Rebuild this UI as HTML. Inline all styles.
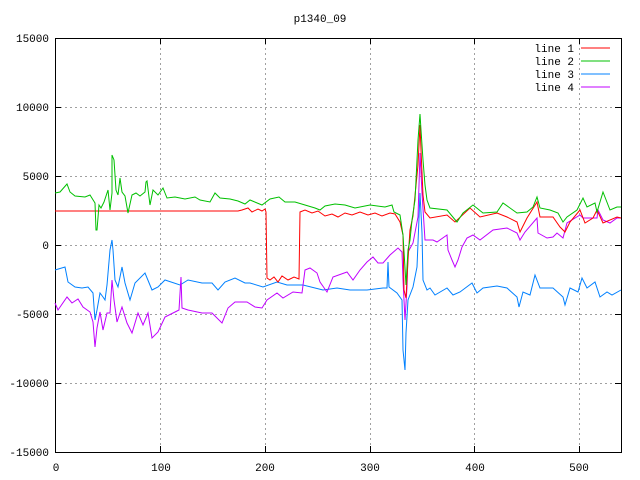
<!DOCTYPE html>
<html><head><meta charset="utf-8"><style>
html,body{margin:0;padding:0;background:#fff;}
svg{display:block;}
text{font-family:"Liberation Mono","DejaVu Sans Mono",monospace;font-size:11px;fill:#000;}
</style></head><body>
<svg width="640" height="480" viewBox="0 0 640 480" xmlns="http://www.w3.org/2000/svg">
<rect width="640" height="480" fill="#fff"/>
<g stroke="#a0a0a0" stroke-width="1" stroke-dasharray="2,3" fill="none">
<path d="M160.5 38V452M265.5 38V452M370.5 38V452M474.5 38V452M579.5 38V452"/>
<path d="M55 107.5H621M55 176.5H621M55 245.5H621M55 314.5H621M55 383.5H621"/>
</g>
<g stroke="#000" stroke-width="1" fill="none">
<rect x="55.5" y="38.5" width="566" height="414"/>
<path d="M55 38.5h6M55 107.5h6M55 176.5h6M55 245.5h6M55 314.5h6M55 383.5h6M55 452.5h6M621 38.5h-6M621 107.5h-6M621 176.5h-6M621 245.5h-6M621 314.5h-6M621 383.5h-6M621 452.5h-6"/>
<path d="M55.5 452v-6M160.5 452v-6M265.5 452v-6M370.5 452v-6M474.5 452v-6M579.5 452v-6M160.5 38v6M265.5 38v6M370.5 38v6M474.5 38v6M579.5 38v6"/>
</g>
<text x="320" y="22" text-anchor="middle">p1340_09</text>
<g text-anchor="end">
<text x="49" y="42">15000</text><text x="49" y="111">10000</text><text x="49" y="180">5000</text>
<text x="49" y="249">0</text><text x="49" y="318">-5000</text><text x="49" y="387">-10000</text><text x="49" y="456">-15000</text>
</g>
<g text-anchor="middle">
<text x="56" y="471">0</text><text x="161" y="471">100</text><text x="265" y="471">200</text><text x="370" y="471">300</text><text x="475" y="471">400</text><text x="579" y="471">500</text>
</g>
<g text-anchor="end">
<text x="574" y="52">line 1</text><text x="574" y="65">line 2</text><text x="574" y="78">line 3</text><text x="574" y="91">line 4</text>
</g>
<g stroke-width="1" fill="none">
<path stroke="#ff0000" d="M581 48h29"/><path stroke="#00c000" d="M581 61h29"/><path stroke="#0080ff" d="M581 74h29"/><path stroke="#c000ff" d="M581 87h29"/>
<polyline stroke="#0080ff" points="55,270 65,267 68,282 75,287 82,288 88,287 93,293 95,320 97,310 100,293 103,297 105,300 107,285 110,250 112,240 113,250 115,280 118,287 122,267 125,283 130,300 135,283 145,273 152,290 158,287 165,280 180,285 188,280 202,283 212,283 218,290 225,282 235,278 245,283 250,283 263,287 277,282 287,285 303,285 323,290 337,288 350,290 367,290 383,288 387,288 388,262 389,287 397,293 402,300 403,350 405,370 406,333 408,300 413,287 417,267 418,243 420,193 422,233 423,280 427,290 430,288 435,295 447,288 453,295 460,292 472,283 477,293 483,288 497,286 507,288 517,297 519,307 523,292 530,295 535,275 540,288 553,288 563,297 565,305 570,288 578,292 582,278 587,288 595,282 600,297 607,292 612,295 621,290"/>
<polyline stroke="#c000ff" points="55,303 58,310 67,297 72,303 78,299 83,307 90,312 93,322 95,347 97,328 100,312 103,330 107,313 110,313 112,280 114,300 117,322 122,307 127,323 132,333 138,313 143,325 148,313 152,338 158,332 165,317 175,312 179,310 181,277 182,308 188,310 202,313 212,313 222,323 228,308 235,302 247,302 255,307 262,308 267,300 277,293 283,298 293,292 302,293 305,270 310,268 317,273 320,282 327,292 333,277 347,272 353,280 360,270 367,262 373,257 378,263 383,263 390,255 398,248 402,252 403,280 405,320 407,287 408,252 413,243 418,217 420,153 422,193 425,240 433,240 437,242 447,235 448,250 452,260 455,267 458,260 462,247 467,238 473,235 480,240 493,230 507,228 517,233 520,240 525,232 537,218 538,233 547,238 553,237 557,233 563,238 567,223 580,215 583,218 597,218 598,210 603,220 610,223 617,218 621,218"/>
<polyline stroke="#ff0000" points="55,211 238,211 242,210 248,208 252,212 258,209 262,211 265,209 266,212 267,278 270,280 274,277 278,282 282,276 288,280 294,277 299,279 300,212 305,210 312,213 318,211 325,216 332,214 338,217 345,213 352,215 360,212 368,215 375,213 382,216 390,213 395,214 400,222 403,235 404,290 406,298 408,260 410,230 413,216 418,165 420,125 421,150 423,195 425,212 430,218 447,215 455,222 470,208 480,217 497,213 507,217 517,222 520,232 527,218 537,202 540,217 553,217 560,227 565,232 570,222 580,210 585,223 593,218 597,210 603,223 617,217 621,218"/>
<polyline stroke="#00c000" points="55,193 60,192 67,184 70,192 75,196 85,197 90,195 95,203 96,230 97,230 99,205 101,208 104,202 108,190 110,210 112,193 112,155 114,160 116,190 118,195 120,178 122,192 125,196 128,213 132,195 136,193 140,196 145,192 146,182 147,181 150,205 153,190 158,195 163,188 167,198 175,197 185,199 195,197 200,200 210,202 215,193 220,198 230,199 238,201 245,204 250,200 262,205 270,199 279,197 285,202 295,202 305,205 315,208 320,210 325,206 335,204 345,205 355,208 370,205 385,207 392,205 394,212 400,215 403,235 405,268 406,285 408,250 410,240 412,220 415,200 416,180 418,140 420,114 421,130 423,160 425,185 427,200 430,208 447,210 457,222 463,213 473,205 483,213 497,212 503,203 517,213 527,212 533,207 537,197 540,208 550,210 558,213 563,222 567,217 577,210 583,198 587,207 595,203 597,212 603,192 610,210 617,207 621,207"/>
</g>
</svg>
</body></html>
